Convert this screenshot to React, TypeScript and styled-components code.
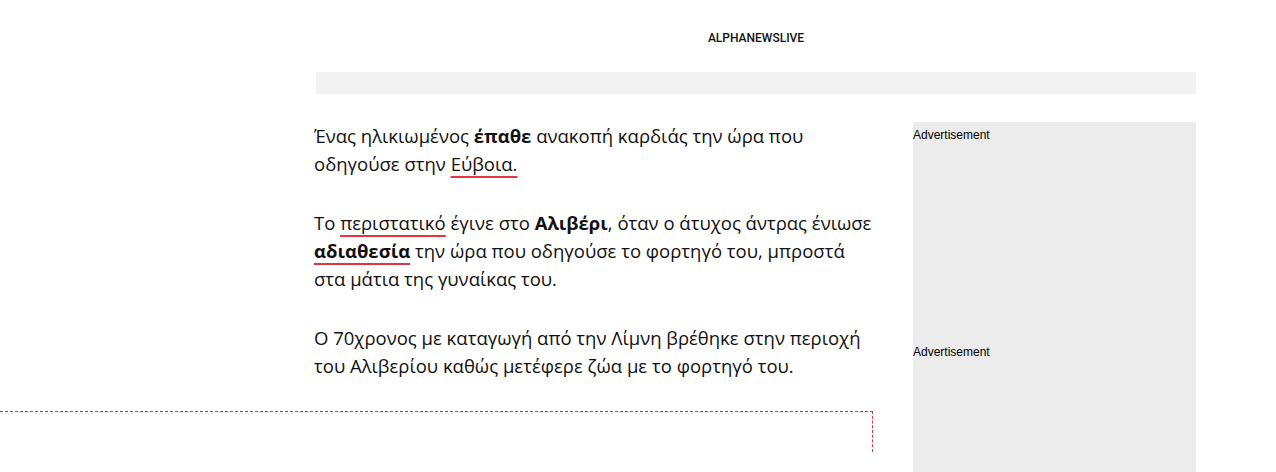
import React from "react";
import styled, { createGlobalStyle } from "styled-components";

const G = createGlobalStyle`
  body { margin: 0; background: #fff; overflow: hidden; }
`;
const Page = styled.div`width: 1276px; height: 472px; overflow: hidden;`;
const Header = styled.div`
  width: 880px; margin: 0 0 0 316px; padding-top: 31px; height: 72px; box-sizing: border-box;
  text-align: center; font: 500 12px Roboto, sans-serif; color: #111;
`;
const Bar = styled.div`width: 880px; height: 22px; margin-left: 316px; background: #f2f2f2;`;
const Main = styled.div`display: flex; margin-left: 314px; margin-top: 28px; gap: 41px;`;
const Article = styled.div`width: 558px; font: 18.5px/28px "Open Sans", sans-serif; color: #111; padding-top: 0;`;
const P = styled.p`margin: 0 0 31px;`;
const U = styled.a`
  color: inherit; text-decoration: underline; text-decoration-color: #e4343f;
  text-decoration-thickness: 2px; text-underline-offset: 5px; text-decoration-skip-ink: auto;
`;
const Dashed = styled.div`
  margin-left: -314px; margin-top: 2px; width: 872px; height: 40px;
  border-top: 1px dashed #e4343f; border-right: 1px dashed #e4343f;
`;
const Side = styled.div`width: 283px; background: #ececec; height: 360px;`;
const Ad = styled.div`height: 217px; padding-top: 6px; box-sizing: border-box; font: 12px "Liberation Sans", Arial, sans-serif; color: #000;`;

export default function App() {
  return (
    <Page>
      <G />
      <Header>ALPHANEWSLIVE</Header>
      <Bar />
      <Main>
        <Article>
          <P>Ένας ηλικιωμένος <b>έπαθε</b> ανακοπή καρδιάς την ώρα που οδηγούσε στην <U>Εύβοια.</U></P>
          <P>Το <U>περιστατικό</U> έγινε στο <b>Αλιβέρι</b>, όταν ο άτυχος άντρας ένιωσε <U><b>αδιαθεσία</b></U> την ώρα που οδηγούσε το φορτηγό του, μπροστά στα μάτια της γυναίκας του.</P>
          <P>Ο 70χρονος με καταγωγή από την Λίμνη βρέθηκε στην περιοχή του Αλιβερίου καθώς μετέφερε ζώα με το φορτηγό του.</P>
          <Dashed />
        </Article>
        <Side>
          <Ad>Advertisement</Ad>
          <Ad>Advertisement</Ad>
        </Side>
      </Main>
    </Page>
  );
}
